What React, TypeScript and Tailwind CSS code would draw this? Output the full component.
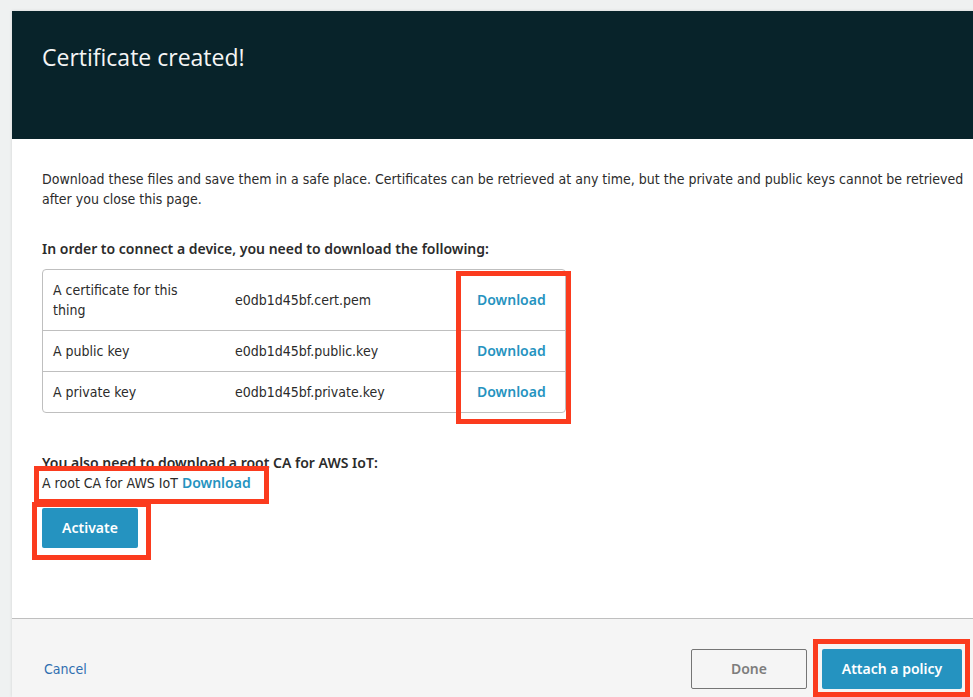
import type { ReactNode } from "react";

const files = [
  { label: "A certificate for this thing", name: "e0db1d45bf.cert.pem" },
  { label: "A public key", name: "e0db1d45bf.public.key" },
  { label: "A private key", name: "e0db1d45bf.private.key" },
];

const strongText = "font-['Noto_Sans',sans-serif] font-semibold";

/** Red annotation frame laid over the content it marks. */
function Highlight({ className }: { className: string }) {
  return (
    <span
      aria-hidden="true"
      className={`pointer-events-none absolute border-5 border-[#fb3b1e] ${className}`}
    />
  );
}

function DownloadLink({ label }: { label: string }) {
  return (
    <a href="#download" aria-label={`Download ${label}`} className={`${strongText} text-[#2593c0]`}>
      Download
    </a>
  );
}

function PrimaryButton({ children, className }: { children: ReactNode; className: string }) {
  return (
    <button
      type="button"
      className={`h-10 rounded-xs bg-[#2593c0] text-white ${strongText} ${className}`}
    >
      {children}
    </button>
  );
}

export default function App() {
  return (
    <div className="flex min-h-screen bg-[#eff1f1] pt-[11px] pl-3 font-['DejaVu_Sans_Condensed','Open_Sans',sans-serif] text-sm leading-5 text-[#2b2b2b]">
      <div className="flex min-w-0 flex-1 flex-col bg-white shadow-[0_0_3px_rgba(0,0,0,0.12)]">
        <header className="h-32 bg-[#08232a] px-[30px] pt-[30px]">
          <h1 className="font-['Open_Sans',sans-serif] text-[23px] leading-8 text-[#f5f5f5]">
            Certificate created!
          </h1>
        </header>

        <main className="flex-1 pt-[30px] pr-2 pb-[70px] pl-[30px]">
          <p>
            Download these files and save them in a safe place. Certificates can be retrieved at any
            time, but the private and public keys cannot be retrieved after you close this page.
          </p>

          <h2 className={`mt-[30px] ${strongText}`}>
            In order to connect a device, you need to download the following:
          </h2>
          <div className="relative mt-[10px] max-w-[524px] rounded-sm border border-[#bfbfbf]">
            <table className="w-full table-fixed">
              <tbody className="divide-y divide-[#bfbfbf]">
                {files.map((file) => (
                  <tr key={file.name}>
                    <th scope="row" className="w-[182px] py-[10px] pr-8 pl-[10px] text-left font-normal">
                      {file.label}
                    </th>
                    <td className="px-[10px] py-[10px]">{file.name}</td>
                    <td className="w-[98px] px-[10px] py-[10px]">
                      <DownloadLink label={file.name} />
                    </td>
                  </tr>
                ))}
              </tbody>
            </table>
            <Highlight className="top-px -right-1.5 -bottom-3 w-[115px]" />
          </div>

          <h2 className={`mt-10 ${strongText}`}>You also need to download a root CA for AWS IoT:</h2>
          <div className="relative flex w-fit gap-1">
            <span>A root CA for AWS IoT</span>
            <DownloadLink label="root CA" />
            <Highlight className="-top-[7px] -bottom-[11px] -left-2 w-[235px]" />
          </div>
          <div className="relative mt-[15px] w-fit">
            <PrimaryButton className="w-24">Activate</PrimaryButton>
            <Highlight className="-top-1.5 -right-[13px] -bottom-3 -left-[10px]" />
          </div>
        </main>

        <footer className="flex items-center border-t border-[#bfbfbf] bg-[#f5f5f5] pt-[30px] pr-[11px] pb-2 pl-8">
          <a href="#cancel" className="text-[#2f6eb0]">
            Cancel
          </a>
          <button
            type="button"
            className={`mr-[15px] ml-auto h-10 w-[116px] rounded-xs border border-[#757575] text-[#7d7d7d] ${strongText}`}
          >
            Done
          </button>
          <div className="relative">
            <PrimaryButton className="w-[140px]">Attach a policy</PrimaryButton>
            <Highlight className="-top-[10px] -right-2 -bottom-2 -left-[9px]" />
          </div>
        </footer>
      </div>
    </div>
  );
}
